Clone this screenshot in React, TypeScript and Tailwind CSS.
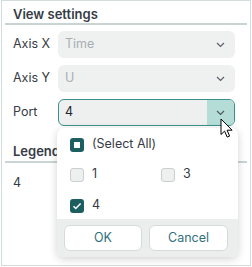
import React from 'react';

function Chevron({ className = '' }: { className?: string }) {
  return (
    <svg width="9" height="6" viewBox="0 0 9 6" className={className}>
      <path d="M1 1l3.5 3.5L8 1" fill="none" stroke="currentColor" strokeWidth="1.2" />
    </svg>
  );
}

function Checkbox({ state }: { state: 'on' | 'off' | 'mixed' }) {
  if (state === 'off') {
    return <span className="w-[14px] h-[14px] rounded-[3px] border border-[#c9cfcf] bg-[#eef0f0]" />;
  }
  return (
    <span className="w-[14px] h-[14px] rounded-[3px] bg-[#1d5f61] flex items-center justify-center">
      {state === 'mixed' ? (
        <span className="w-[6px] h-[6px] bg-white" />
      ) : (
        <svg width="10" height="10" viewBox="0 0 10 10">
          <path d="M1.5 5.2l2.3 2.3L8.6 2.4" fill="none" stroke="white" strokeWidth="1.5" />
        </svg>
      )}
    </span>
  );
}

function DisabledSelect({ value }: { value: string }) {
  return (
    <div className="w-[177px] h-[27px] rounded-[6px] bg-[#eff1f1] flex items-center justify-between pl-[7px] pr-[10px]">
      <span className="text-[#a9aeb1]">{value}</span>
      <Chevron className="text-[#5b6066]" />
    </div>
  );
}

export default function App() {
  return (
    <div
      className="ml-px w-[250px] h-[266px] border border-[#d3dcdc] bg-white text-[12.5px] text-[#363b45] relative"
      style={{ fontFamily: 'Inter, "Noto Sans", sans-serif' }}
    >
      <div className="mx-[3px] h-[24px] border-b-2 border-[#c9d5d5] pl-[8px] pt-[4px] font-semibold text-[13px]">
        View settings
      </div>

      <div className="flex flex-col gap-[7px] mt-[6px] px-[11px]">
        <div className="flex items-center">
          <span className="w-[45px]">Axis X</span>
          <DisabledSelect value="Time" />
        </div>
        <div className="flex items-center">
          <span className="w-[45px]">Axis Y</span>
          <DisabledSelect value="U" />
        </div>
        <div className="flex items-center relative">
          <span className="w-[45px]">Port</span>
          <div className="w-[177px] h-[27px] rounded-[6px] border border-[#3a918b] bg-[#eef0f0] flex items-center justify-between overflow-hidden">
            <span className="pl-[6px] text-[#22262e]">4</span>
            <span className="w-[27px] h-full bg-[#b4ddd7] flex items-center justify-center">
              <Chevron className="text-[#4b5a5c]" />
            </span>
          </div>
        </div>
      </div>

      <div className="mx-[3px] mt-[16px] h-[21px] border-b-2 border-[#c9d5d5] pl-[8px] font-semibold text-[13px]">
        Legend
      </div>
      <div className="pl-[11px] pt-[11px]">4</div>

      <div className="absolute left-[55px] top-[127px] w-[181px] h-[129px] rounded-[7px] bg-white shadow-[0_2px_8px_rgba(0,0,0,0.18)] flex flex-col overflow-hidden">
        <div className="flex-1 pl-[13px] pt-[9px]">
          <div className="flex items-center gap-[8px] h-[15px]">
            <Checkbox state="mixed" />
            <span>(Select All)</span>
          </div>
          <div className="grid grid-cols-[91px_91px] mt-[15px]">
            <div className="flex items-center gap-[8px] h-[15px]">
              <Checkbox state="off" />
              <span>1</span>
            </div>
            <div className="flex items-center gap-[8px] h-[15px]">
              <Checkbox state="off" />
              <span>3</span>
            </div>
          </div>
          <div className="flex items-center gap-[8px] h-[15px] mt-[16px]">
            <Checkbox state="on" />
            <span>4</span>
          </div>
        </div>
        <div className="h-[38px] bg-[#eceeee] flex items-center gap-[7px] pl-[7px]">
          <button className="w-[78px] h-[26px] rounded-[6px] border border-[#d3dbdb] bg-white text-[#2f6f7c]">OK</button>
          <button className="w-[79px] h-[26px] rounded-[6px] border border-[#d3dbdb] bg-white text-[#2f6f7c]">Cancel</button>
        </div>
      </div>

      <svg className="absolute left-[218px] top-[117px]" width="14" height="21" viewBox="0 0 14 21">
        <path
          d="M1 1v15.5l3.6-3.4 2.6 6 2.4-1-2.5-5.9h5z"
          fill="white"
          stroke="black"
          strokeWidth="1"
          strokeLinejoin="round"
        />
      </svg>
    </div>
  );
}
